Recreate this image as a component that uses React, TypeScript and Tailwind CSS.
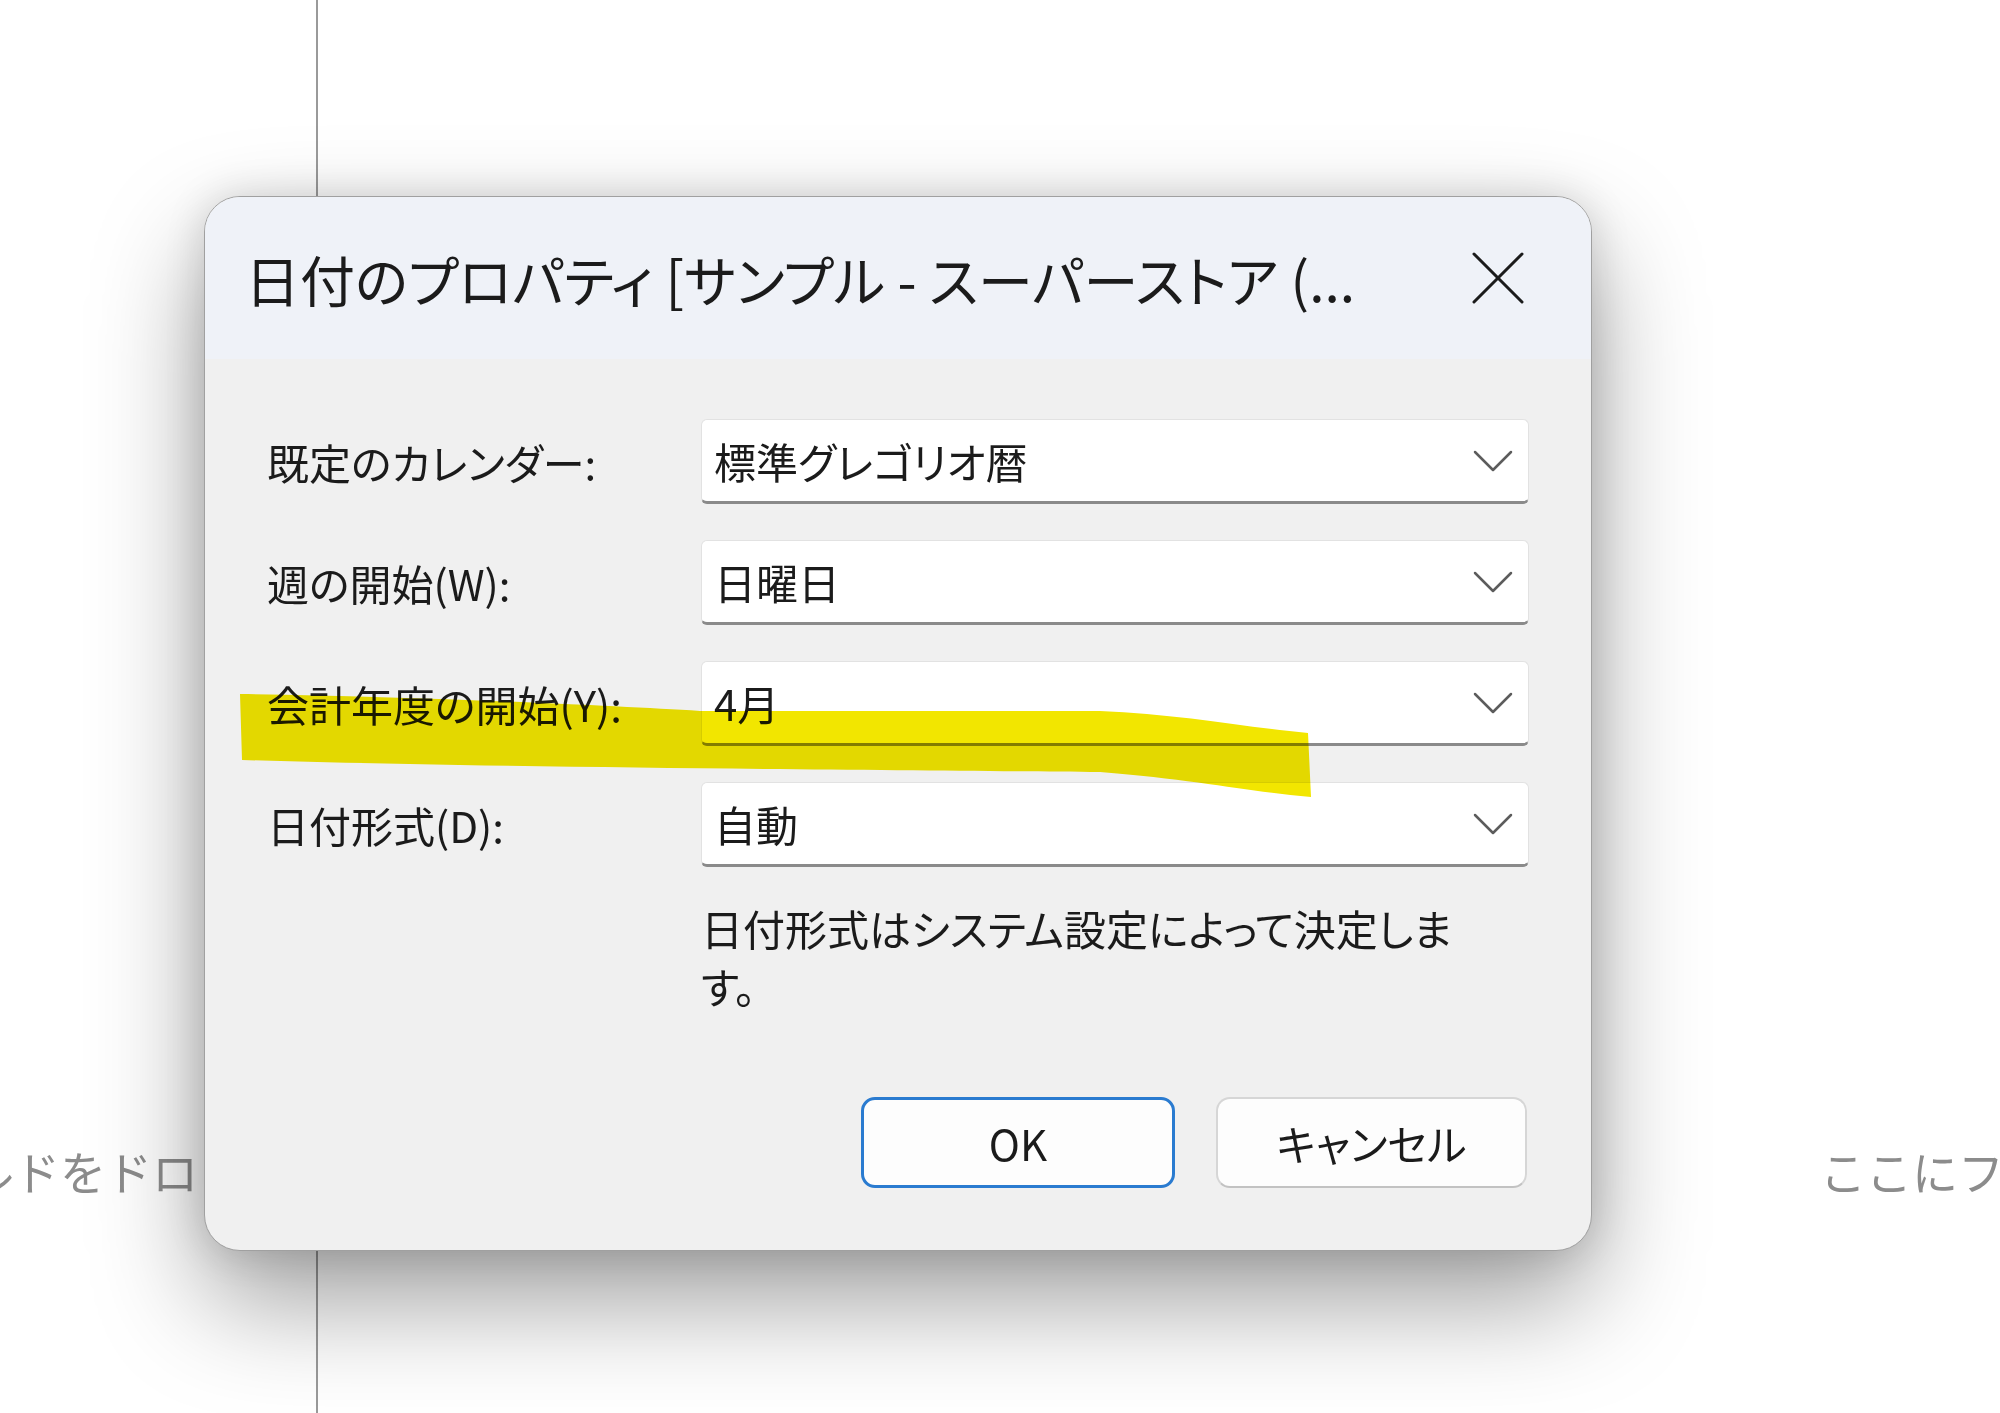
import React from 'react';

const rows = [
  { label: '既定のカレンダー:', value: '標準グレゴリオ暦' },
  { label: '週の開始(W):', value: '日曜日' },
  { label: '会計年度の開始(Y):', value: '4月' },
  { label: '日付形式(D):', value: '自動' },
];

function Chevron() {
  return (
    <svg width="40" height="22" viewBox="0 0 40 22" fill="none" stroke="#5c5c5c" strokeWidth="2.5" strokeLinecap="round" strokeLinejoin="round">
      <path d="M2 2 L20 20 L38 2" />
    </svg>
  );
}

function CloseIcon() {
  return (
    <svg width="54" height="54" viewBox="0 0 54 54" fill="none" stroke="#1b1b1b" strokeWidth="3" strokeLinecap="round">
      <path d="M3 3 L51 51 M51 3 L3 51" />
    </svg>
  );
}

export default function App() {
  return (
    <div className="relative w-[2000px] h-[1413px] overflow-hidden bg-white font-['Noto_Sans_CJK_JP',sans-serif]">
      {/* background: workspace behind the dialog */}
      <div className="flex h-full">
        <div className="w-[318px] shrink-0 overflow-hidden border-r-2 border-[#9a9a9a] pt-[1136px]">
          <div className="-ml-[307px] whitespace-nowrap text-[46px] leading-[68px] text-[#8c8c8c]">ここにフィールドをドロップ</div>
        </div>
        <div className="flex-1 overflow-hidden pl-[1502px] pt-[1136px]">
          <div className="whitespace-nowrap text-[46px] leading-[68px] text-[#8c8c8c]">ここにフィールドをドロップ</div>
        </div>
      </div>

      {/* dialog */}
      <div className="absolute left-[204px] top-[196px] w-[1388px] overflow-hidden rounded-[36px] border border-[#a0a0a0] bg-[#f0f0f0] shadow-[0_50px_110px_rgba(0,0,0,0.38),0_0_40px_rgba(0,0,0,0.14)] [font-feature-settings:'palt']">
        <div className="flex h-[162px] items-center justify-between bg-[#eff2f8] pl-[40px] pr-[66px]">
          <div className="whitespace-nowrap text-[55px] text-[#1b1b1b]">日付のプロパティ [サンプル - スーパーストア (...</div>
          <CloseIcon />
        </div>

        <div className="px-[62px] pb-[62px] pt-[60px]">
          <div className="grid grid-cols-[434px_1fr] gap-y-[36px]">
            {rows.map((r) => (
              <React.Fragment key={r.label}>
                <div className="flex h-[85px] items-center whitespace-nowrap text-[42px] text-[#1b1b1b]">{r.label}</div>
                <div className="flex h-[85px] items-center justify-between rounded-[6px] border border-[#e2e2e2] border-b-[3px] border-b-[#8a8a8a] bg-white pl-[12px] pr-[15px]">
                  <span className="whitespace-nowrap text-[42px] text-[#1b1b1b]">{r.value}</span>
                  <Chevron />
                </div>
              </React.Fragment>
            ))}
          </div>

          <div className="ml-[434px] mt-[32px] whitespace-nowrap text-[42px] leading-[58px] text-[#1b1b1b]">
            日付形式はシステム設定によって決定しま
            <br />
            す。
          </div>

          <div className="mr-[2px] mt-[82px] flex justify-end gap-[41px]">
            <button className="h-[91px] w-[314px] rounded-[14px] border-[3px] border-[#2a7bd0] bg-[#fdfdfd] text-[42px] text-[#1b1b1b]">OK</button>
            <button className="h-[91px] w-[311px] rounded-[14px] border-2 border-[#d6d6d6] border-b-[#c2c2c2] bg-[#fdfdfd] text-[42px] text-[#1b1b1b]">キャンセル</button>
          </div>
        </div>
      </div>

      {/* highlighter annotation */}
      <svg className="pointer-events-none absolute inset-0 mix-blend-multiply" width="2000" height="1413" viewBox="0 0 2000 1413">
        <path
          d="M240 694 C400 696 600 705 700 711 L1100 711 C1180 714 1250 728 1308 733 L1311 797 C1250 792 1200 780 1100 772 C900 770 500 768 242 760 Z"
          fill="#f2e600"
        />
      </svg>
    </div>
  );
}
